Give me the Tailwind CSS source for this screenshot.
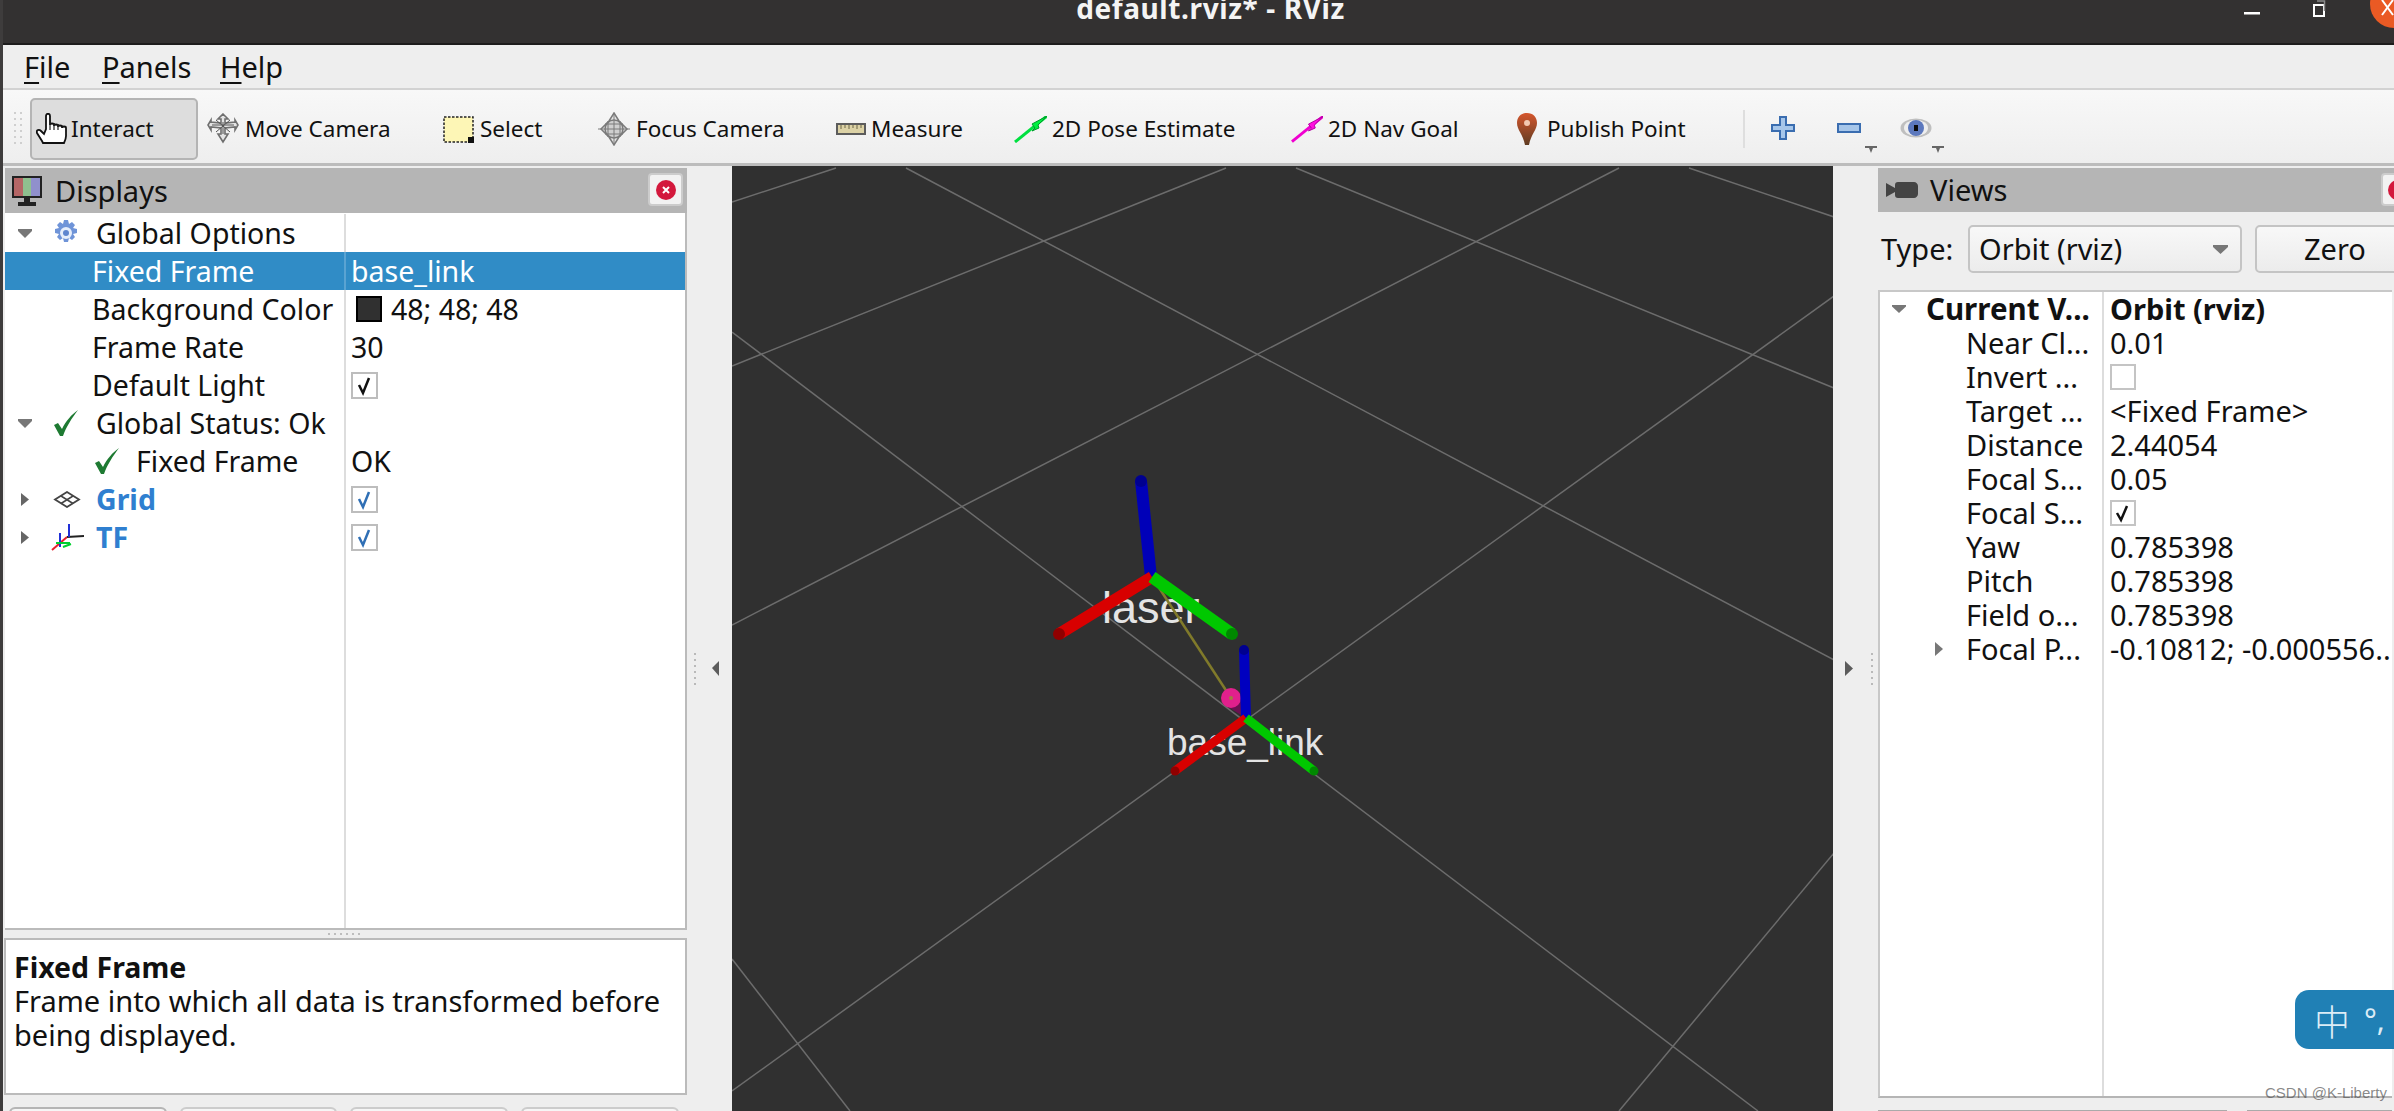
<!doctype html>
<html lang="en">
<head>
  <meta charset="utf-8" />
  <title>default.rviz* - RViz</title>
  <script src="https://cdn.jsdelivr.net/npm/@tailwindcss/browser@4"></script>
</head>
<body class="bg-[#eeeeee]">
<div class="flex flex-col w-[2394px] h-[1111px] overflow-hidden border-l-[3px] border-[#3e3c3c] bg-[#eeeeee] text-[#111] font-['Noto_Sans',sans-serif] whitespace-nowrap">

  <!-- title bar -->
  <div class="relative shrink-0 h-[45px] bg-[#333131] flex justify-center border-b-2 border-[#1d1c1c] -ml-[3px]">
    <span class="text-[28px] leading-none font-bold text-[#f4f4f4] -mt-[6px] ml-[27px] tracking-[0.6px]">default.rviz* - RViz</span>
    <svg class="absolute left-[2240px] top-0" width="154" height="30" viewBox="0 0 154 30">
      <rect x="4" y="12" width="16" height="2.500" fill="#fff"/>
      <rect x="74" y="5" width="10" height="11" fill="none" stroke="#fff" stroke-width="2"/>
      <path d="M77 1h7.500v10" fill="none" stroke="#8b8b8b" stroke-width="1.500"/>
      <circle cx="154" cy="4" r="24" fill="#ea5a24"/>
      <path d="M142 0l11 15M153 0l-11 15" stroke="#fff" stroke-width="2"/>
    </svg>
  </div>

  <!-- menu bar -->
  <div class="shrink-0 h-[45px] bg-[#eeeeee] border-b-2 border-[#d2d2d2] flex items-center pl-[21px] text-[29px]">
    <span class="w-[78px]"><u class="underline-offset-4">F</u>ile</span>
    <span class="w-[118px]"><u class="underline-offset-4">P</u>anels</span>
    <span><u class="underline-offset-4">H</u>elp</span>
  </div>

  <!-- toolbar -->
  <div class="shrink-0 h-[76px] bg-linear-to-b from-[#f8f8f8] to-[#eeeeee] border-b-[3px] border-[#bcbcbc] flex items-center text-[22.500px] pl-[11px] pt-[5px]">
    <svg class="shrink-0" width="8" height="34" viewBox="0 0 8 34" fill="#cfcfcf">
      <rect x="0" y="0" width="2" height="2"/><rect x="6" y="0" width="2" height="2"/>
      <rect x="0" y="6" width="2" height="2"/><rect x="6" y="6" width="2" height="2"/>
      <rect x="0" y="12" width="2" height="2"/><rect x="6" y="12" width="2" height="2"/>
      <rect x="0" y="18" width="2" height="2"/><rect x="6" y="18" width="2" height="2"/>
      <rect x="0" y="24" width="2" height="2"/><rect x="6" y="24" width="2" height="2"/>
      <rect x="0" y="30" width="2" height="2"/><rect x="6" y="30" width="2" height="2"/>
    </svg>
    <div class="shrink-0 ml-[8px] w-[168px] h-[62px] bg-[#dddddd] border-2 border-[#b4b4b4] rounded-[5px] flex items-center pl-[4px]">
      <svg class="shrink-0" width="32" height="32" viewBox="0 0 32 32"><path d="M10 16V3c0-3 4-3 4 0v9c0-2 4-2 4 0v1c0-2 4-2 4 0v1c0-2 4-2 4 0v1c0-2 4-2 4 0v8c0 3-1 5-2 7H7l-1-2-5-8c-1-3 2-4 4-2l3 3z" fill="#fff" stroke="#111" stroke-width="1.800"/><path d="M14 7v10M18 10v7M22 11v6" stroke="#222" stroke-width="1.200"/></svg>
      <span class="ml-[3px]">Interact</span>
    </div>
    <div class="shrink-0 ml-[9px] w-[236px] flex items-center">
      <svg class="shrink-0" width="32" height="32" viewBox="0 0 32 32" fill="none" stroke="#6f6f6f" stroke-width="1.600"><path d="M16 1l5 5h-3v4l10-1V7l3 5-3 5v-3l-10 1v6h3l-5 8-5-8h3v-6L4 14v3l-3-5 3-5v2l10 1V6h-3z" fill="#e4e4e4"/><path d="M9 7l14 12M23 7L9 19M16 9v12M5 12h22" stroke="#555" stroke-width="1"/></svg>
      <span class="ml-[6px]">Move Camera</span>
    </div>
    <div class="shrink-0 w-[154px] flex items-center">
      <svg class="shrink-0" width="31" height="27" viewBox="0 0 31 27"><rect x="1" y="1" width="29" height="25" fill="#fdf6b6" stroke="#222" stroke-width="1.500" stroke-dasharray="2.500 1.500"/><rect x="25" y="21" width="6" height="6" fill="#111"/></svg>
      <span class="ml-[6px]">Select</span>
    </div>
    <div class="shrink-0 w-[239px] flex items-center">
      <svg class="shrink-0" width="34" height="34" viewBox="0 0 34 34" fill="none" stroke="#7a7a7a" stroke-width="1.500"><path d="M17 1l5 8 8 8-8 8-5 8-5-8-8-8 8-8z" fill="#e6e6e6"/><circle cx="17" cy="17" r="9" fill="#cfcfcf"/><path d="M17 1v32M1 17h32M11 9v16M23 9v16M8 12h18M8 22h18" stroke-width="1"/></svg>
      <span class="ml-[5px]">Focus Camera</span>
    </div>
    <div class="shrink-0 w-[178px] flex items-center">
      <svg class="shrink-0" width="30" height="12" viewBox="0 0 30 12"><rect x="1" y="1" width="28" height="10" fill="#dcd2a6" stroke="#5c5c5c" stroke-width="2"/><path d="M5 2v4M9 2v3M13 2v4M17 2v3M21 2v4M25 2v3" stroke="#6b6444" stroke-width="1"/></svg>
      <span class="ml-[5px]">Measure</span>
    </div>
    <div class="shrink-0 w-[277px] flex items-center">
      <svg class="shrink-0" width="33" height="27" viewBox="0 0 33 27"><path d="M1 26L33 0" stroke="#00e040" stroke-width="3"/><path d="M33 0L18 8l3 4-3 3 7-3-1-3z" fill="#00f040" stroke="#009a2a" stroke-width="1"/></svg>
      <span class="ml-[5px]">2D Pose Estimate</span>
    </div>
    <div class="shrink-0 w-[226px] flex items-center">
      <svg class="shrink-0" width="32" height="27" viewBox="0 0 33 27"><path d="M1 26L33 0" stroke="#f000d0" stroke-width="3"/><path d="M33 0L18 8l3 4-3 3 7-3-1-3z" fill="#ff10e0" stroke="#b000a0" stroke-width="1"/></svg>
      <span class="ml-[5px]">2D Nav Goal</span>
    </div>
    <div class="shrink-0 w-[226px] flex items-center">
      <svg class="shrink-0" width="20" height="32" viewBox="0 0 20 32"><defs><linearGradient id="pin" x1="0" y1="0" x2="0" y2="1"><stop offset="0" stop-color="#d5562d"/><stop offset="1" stop-color="#5f3c22"/></linearGradient></defs><path d="M10 0c6 0 10 4 10 10 0 7-6 11-8 22h-4C6 21 0 17 0 10 0 4 4 0 10 0z" fill="url(#pin)"/><circle cx="10" cy="10" r="3" fill="#f2c8b0"/></svg>
      <span class="ml-[10px]">Publish Point</span>
    </div>
    <div class="shrink-0 w-[2px] h-[38px] bg-[#dedede] -mt-[1px]"></div>
    <svg class="shrink-0 ml-[26px] -mt-[3px]" width="24" height="24" viewBox="0 0 24 24"><path d="M9 1h6v8h8v6h-8v8H9v-8H1V9h8z" fill="#a6c6ea" stroke="#3a6db0" stroke-width="2"/></svg>
    <div class="shrink-0 ml-[42px] w-[41px] h-[36px] relative">
      <svg class="absolute left-0 top-[12px]" width="24" height="10" viewBox="0 0 24 10"><rect x="1" y="1" width="22" height="8" fill="#a6c6ea" stroke="#3a6db0" stroke-width="2"/></svg>
      <svg class="absolute left-[28px] top-[35px]" width="12" height="7" viewBox="0 0 12 7"><path d="M0 0h12v2H8l-2 5-2-5H0z" fill="#666"/></svg>
    </div>
    <div class="shrink-0 ml-[22px] w-[44px] h-[36px] relative">
      <svg class="absolute left-0 top-[7px]" width="32" height="20" viewBox="0 0 32 20"><ellipse cx="16" cy="10" rx="15.500" ry="9.500" fill="#bfbfbf"/><ellipse cx="16" cy="10" rx="12" ry="8" fill="#eeeeee"/><circle cx="16" cy="10" r="8" fill="#5c78bd"/><rect x="14" y="7" width="4" height="6" fill="#0c0c0c"/></svg>
      <svg class="absolute left-[32px] top-[35px]" width="12" height="7" viewBox="0 0 12 7"><path d="M0 0h12v2H8l-2 5-2-5H0z" fill="#666"/></svg>
    </div>
  </div>

  <!-- main area -->
  <div class="flex-1 flex min-h-0">

    <!-- displays panel -->
    <div class="shrink-0 w-[684px] pt-[2px] flex flex-col">
      <div class="shrink-0 h-[45px] ml-[2px] bg-[#b5b5b5] flex items-center text-[29px] pl-[6px] relative">
        <svg class="shrink-0" width="32" height="32" viewBox="0 0 32 32"><rect x="1" y="1" width="30" height="22" fill="#222"/><rect x="3" y="3" width="9" height="18" fill="#b56666"/><rect x="12" y="3" width="8" height="18" fill="#8fc08f"/><rect x="20" y="3" width="9" height="18" fill="#9090cc"/><rect x="13" y="23" width="6" height="4" fill="#222"/><rect x="7" y="27" width="18" height="4" fill="#222"/></svg>
        <span class="ml-[12px]">Displays</span>
        <div class="absolute left-[643px] top-[5px] w-[35px] h-[33px] bg-[#f2f2f2] border-2 border-[#cccccc] rounded-[4px] flex items-center justify-center">
          <svg width="22" height="22" viewBox="0 0 22 22"><circle cx="11" cy="11" r="10" fill="#d3183c"/><path d="M8 8l6 6M14 8l-6 6" stroke="#fff" stroke-width="2"/></svg>
        </div>
      </div>

      <div class="shrink-0 h-[717px] ml-[2px] pt-[1px] bg-white border-r-2 border-b-2 border-[#bbbbbb] flex flex-col text-[28.500px] leading-[38px]">
        <div class="flex shrink-0 h-[38px] items-center">
          <div class="w-[341px] h-full border-r-2 border-[#dddddd] flex items-center">
            <svg class="shrink-0 ml-[13px]" width="14" height="9" viewBox="0 0 14 9"><path d="M0 0h14v2l-7 7-7-7z" fill="#777"/></svg>
            <svg class="shrink-0 ml-[21px]" width="26" height="26" viewBox="0 0 26 26"><path d="M11 0h4l1 4 3-2 3 3-2 3 4 1v4l-4 1 2 3-3 3-3-2-1 4h-4l-1-4-3 2-3-3 2-3-4-1V9l4-1-2-3 3-3 3 2z" fill="#6f94d8"/><circle cx="13" cy="13" r="6" fill="#e6eefb"/><circle cx="13" cy="13" r="3" fill="#5f86cf"/></svg>
            <span class="ml-[17px]">Global Options</span>
          </div>
        </div>
        <div class="flex shrink-0 h-[38px] items-center bg-[#308cc6] text-white">
          <div class="w-[341px] h-full border-r-2 border-[#5aa3d2] flex items-center pl-[87px]">Fixed Frame</div>
          <div class="pl-[5px]">base_link</div>
        </div>
        <div class="flex shrink-0 h-[38px] items-center">
          <div class="w-[341px] h-full border-r-2 border-[#dddddd] flex items-center pl-[87px]">Background Color</div>
          <div class="flex items-center pl-[10px]"><span class="w-[26px] h-[26px] bg-[#303030] border-2 border-black"></span><span class="ml-[9px]">48; 48; 48</span></div>
        </div>
        <div class="flex shrink-0 h-[38px] items-center">
          <div class="w-[341px] h-full border-r-2 border-[#dddddd] flex items-center pl-[87px]">Frame Rate</div>
          <div class="pl-[5px]">30</div>
        </div>
        <div class="flex shrink-0 h-[38px] items-center">
          <div class="w-[341px] h-full border-r-2 border-[#dddddd] flex items-center pl-[87px]">Default Light</div>
          <div class="pl-[5px]"><svg class="block" width="27" height="27" viewBox="0 0 27 27"><rect x="1" y="1" width="25" height="25" fill="#fff" stroke="#bdbdbd" stroke-width="2"/><path d="M8 13l4 8 6-15" fill="none" stroke="#111" stroke-width="2.500"/></svg></div>
        </div>
        <div class="flex shrink-0 h-[38px] items-center">
          <div class="w-[341px] h-full border-r-2 border-[#dddddd] flex items-center">
            <svg class="shrink-0 ml-[13px]" width="14" height="9" viewBox="0 0 14 9"><path d="M0 0h14v2l-7 7-7-7z" fill="#777"/></svg>
            <svg class="shrink-0 ml-[21px]" width="26" height="26" viewBox="0 0 26 26"><path d="M1 15l4-2 4 6C13 11 18 5 25 0 19 8 13 17 10 26H7z" fill="#1e7a32"/></svg>
            <span class="ml-[17px]">Global Status: Ok</span>
          </div>
        </div>
        <div class="flex shrink-0 h-[38px] items-center">
          <div class="w-[341px] h-full border-r-2 border-[#dddddd] flex items-center pl-[89px]">
            <svg class="shrink-0" width="26" height="26" viewBox="0 0 26 26"><path d="M1 15l4-2 4 6C13 11 18 5 25 0 19 8 13 17 10 26H7z" fill="#1e7a32"/></svg>
            <span class="ml-[16px]">Fixed Frame</span>
          </div>
          <div class="pl-[5px]">OK</div>
        </div>
        <div class="flex shrink-0 h-[38px] items-center">
          <div class="w-[341px] h-full border-r-2 border-[#dddddd] flex items-center">
            <svg class="shrink-0 ml-[16px]" width="8" height="13" viewBox="0 0 8 13"><path d="M0 0l8 6.500-8 6.500z" fill="#666"/></svg>
            <svg class="shrink-0 ml-[24px]" width="28" height="17" viewBox="0 0 28 17" fill="none" stroke="#444" stroke-width="1.800"><path d="M14 1l12 7.500L14 16 2 8.500z"/><path d="M8 5l12 7.500M20 5L8 12.500" stroke-width="1.500"/></svg>
            <span class="ml-[15px] font-bold text-[#2f7fd0]">Grid</span>
          </div>
          <div class="pl-[5px]"><svg class="block" width="27" height="27" viewBox="0 0 27 27"><rect x="1" y="1" width="25" height="25" fill="#fff" stroke="#bdbdbd" stroke-width="2"/><path d="M8 13l4 8 6-15" fill="none" stroke="#2f6fb5" stroke-width="2.500"/></svg></div>
        </div>
        <div class="flex shrink-0 h-[38px] items-center">
          <div class="w-[341px] h-full border-r-2 border-[#dddddd] flex items-center">
            <svg class="shrink-0 ml-[16px]" width="8" height="13" viewBox="0 0 8 13"><path d="M0 0l8 6.500-8 6.500z" fill="#666"/></svg>
            <svg class="shrink-0 ml-[22px]" width="33" height="28" viewBox="0 0 33 28" fill="none" stroke-width="2"><path d="M16 14L1 27" stroke="#e8202c"/><path d="M16 14l17-1" stroke="#222"/><path d="M18 1v13M9 10v14" stroke="#2030d8"/><path d="M5 20h14M12 24l8-3" stroke="#00d030"/></svg>
            <span class="ml-[12px] font-bold text-[#2f7fd0]">TF</span>
          </div>
          <div class="pl-[5px]"><svg class="block" width="27" height="27" viewBox="0 0 27 27"><rect x="1" y="1" width="25" height="25" fill="#fff" stroke="#bdbdbd" stroke-width="2"/><path d="M8 13l4 8 6-15" fill="none" stroke="#2f6fb5" stroke-width="2.500"/></svg></div>
        </div>
        <div class="flex-1 flex"><div class="w-[341px] border-r-2 border-[#dddddd]"></div></div>
      </div>

      <!-- splitter -->
      <div class="shrink-0 h-[8px] flex items-center justify-center">
        <svg width="34" height="2" viewBox="0 0 34 2" fill="#bdbdbd"><rect x="0" width="2" height="2"/><rect x="6" width="2" height="2"/><rect x="12" width="2" height="2"/><rect x="18" width="2" height="2"/><rect x="24" width="2" height="2"/><rect x="30" width="2" height="2"/></svg>
      </div>

      <!-- help panel -->
      <div class="shrink-0 h-[157px] ml-[1px] bg-white border-2 border-[#bbbbbb] pl-[8px] pt-[10px] text-[29px] leading-[34px]">
        <div class="font-bold text-[28.500px]">Fixed Frame</div>
        <div>Frame into which all data is transformed before</div>
        <div>being displayed.</div>
      </div>

      <div class="shrink-0 flex mt-[12px] ml-[6px] gap-[13px]">
        <div class="w-[158px] h-[30px] bg-[#f6f6f6] border-2 border-[#b5b5b5] rounded-t-[6px]"></div>
        <div class="w-[157px] h-[30px] bg-[#f6f6f6] border-2 border-[#cccccc] rounded-t-[6px]"></div>
        <div class="w-[158px] h-[30px] bg-[#f6f6f6] border-2 border-[#cccccc] rounded-t-[6px]"></div>
        <div class="w-[158px] h-[30px] bg-[#f6f6f6] border-2 border-[#cccccc] rounded-t-[6px]"></div>
      </div>
    </div>

    <!-- left dock handle -->
    <div class="shrink-0 w-[45px] pt-[487px] pl-[7px]">
      <svg class="block" width="32" height="32" viewBox="0 0 32 32"><g fill="#b9b9b9"><rect x="0" y="0" width="2" height="2"/><rect x="0" y="6" width="2" height="2"/><rect x="0" y="12" width="2" height="2"/><rect x="0" y="18" width="2" height="2"/><rect x="0" y="24" width="2" height="2"/><rect x="0" y="30" width="2" height="2"/></g><path d="M25 8L18 15l7 8z" fill="#5c5c5c"/></svg>
    </div>

    <!-- 3D view -->
    <svg class="shrink-0 block bg-[#303030]" width="1101" height="945" viewBox="732 166 1101 945">
      <g stroke="#6c6c6c" stroke-width="1.500">
        <path d="M732 202L836 168"/>
        <path d="M732 366L1226 168"/>
        <path d="M732 625L1619 168"/>
        <path d="M732 1091L1834 296"/>
        <path d="M1619 1111L1834 853"/>
        <path d="M906 168L1834 660"/>
        <path d="M1296 168L1834 388"/>
        <path d="M1689 168L1834 217"/>
        <path d="M732 332L1758 1111"/>
        <path d="M732 959L850 1111"/>
      </g>
      <text x="1102" y="623" font-family="Liberation Sans" font-size="45" fill="#e4e4e4">laser</text>
      <text x="1167" y="755" font-family="Liberation Sans" font-size="37" fill="#e4e4e4">base_link</text>
      <path d="M1152 577L1231 698" stroke="#807a2a" stroke-width="2.500"/>
      <path d="M1223 704L1240 692L1246 718z" fill="#6a1050"/>
      <circle cx="1231" cy="698" r="10" fill="#e0208c"/>
      <circle cx="1231" cy="698" r="2" fill="#a07a40"/>
      <path d="M1141 481L1151 577" stroke="#0000b8" stroke-width="12"/>
      <circle cx="1141" cy="481" r="6" fill="#000090"/>
      <path d="M1152 577L1059 634" stroke="#d80000" stroke-width="12"/>
      <circle cx="1059" cy="634" r="6" fill="#900000"/>
      <path d="M1152 577L1232 634" stroke="#00c800" stroke-width="12"/>
      <circle cx="1232" cy="634" r="6" fill="#008800"/>
      <path d="M1244 650L1246 718" stroke="#0000c0" stroke-width="10"/>
      <circle cx="1244" cy="650" r="5" fill="#000090"/>
      <path d="M1246 718L1175 771" stroke="#d80000" stroke-width="9"/>
      <circle cx="1175" cy="771" r="4.500" fill="#900000"/>
      <path d="M1246 718L1314 771" stroke="#00c800" stroke-width="9"/>
      <circle cx="1314" cy="771" r="4.500" fill="#008800"/>
    </svg>

    <!-- right dock handle -->
    <div class="shrink-0 w-[45px] pt-[487px] pl-[12px]">
      <svg class="block" width="30" height="32" viewBox="0 0 30 32"><path d="M0 8l8 7.500L0 23z" fill="#5c5c5c"/><g fill="#b9b9b9"><rect x="26" y="0" width="2" height="2"/><rect x="26" y="6" width="2" height="2"/><rect x="26" y="12" width="2" height="2"/><rect x="26" y="18" width="2" height="2"/><rect x="26" y="24" width="2" height="2"/><rect x="26" y="30" width="2" height="2"/></g></svg>
    </div>

    <!-- views panel -->
    <div class="flex-1 min-w-0 pt-[2px] flex flex-col relative overflow-hidden">
      <div class="h-[44px] bg-[#b5b5b5] flex items-center text-[29px] pl-[8px] relative shrink-0">
        <svg class="shrink-0" width="32" height="16" viewBox="0 0 32 16"><path d="M0 1l9 5V3c0-2 1-3 3-3h16c2 0 4 2 4 4v8c0 2-2 4-4 4H12c-2 0-3-1-3-3v-3l-9 5z" fill="#444"/></svg>
        <span class="ml-[12px]">Views</span>
        <div class="absolute left-[503px] top-[5px] w-[35px] h-[33px] bg-[#f2f2f2] border-2 border-[#cccccc] rounded-[4px] flex items-center pl-[4px]">
          <svg width="22" height="22" viewBox="0 0 22 22"><circle cx="11" cy="11" r="10" fill="#d3183c"/></svg>
        </div>
      </div>
      <div class="h-[48px] mt-[13px] shrink-0 flex items-center text-[29px] pl-[3px]">
        <span class="shrink-0 w-[87px]">Type:</span>
        <div class="shrink-0 w-[274px] h-full bg-linear-to-b from-[#f8f8f8] to-[#ececec] border-2 border-[#c4c4c4] rounded-[5px] flex items-center pl-[9px] relative">
          Orbit (rviz)
          <svg class="absolute right-[12px] top-[18px]" width="15" height="9" viewBox="0 0 15 9"><path d="M0 0h15v2l-7.500 7L0 2z" fill="#777"/></svg>
        </div>
        <div class="ml-[13px] w-[200px] h-full bg-linear-to-b from-[#f8f8f8] to-[#ececec] border-2 border-[#c4c4c4] rounded-[5px] flex items-center pl-[47px] shrink-0">Zero</div>
      </div>
      <div class="h-[808px] w-[514px] mt-[17px] shrink-0 bg-white border-l-2 border-t-2 border-b-2 border-l-[#c8c8c8] border-t-[#c8c8c8] border-b-[#b5b5b5] flex flex-col text-[29px] leading-[34px] overflow-hidden">
        <div class="flex shrink-0 h-[34px] items-center font-bold">
          <div class="shrink-0 w-[224px] h-full border-r-2 border-[#dddddd] flex items-center pl-[12px]"><svg class="shrink-0" width="14" height="8" viewBox="0 0 14 8"><path d="M0 0h14v1.500L7 8 0 1.500z" fill="#777"/></svg><span class="ml-[20px] text-[29.500px]">Current V...</span></div>
          <div class="pl-[6px]">Orbit (rviz)</div>
        </div>
        <div class="flex shrink-0 h-[34px] items-center"><div class="shrink-0 w-[224px] h-full border-r-2 border-[#dddddd] flex items-center pl-[86px]">Near Cl...</div><div class="pl-[6px]">0.01</div></div>
        <div class="flex shrink-0 h-[34px] items-center"><div class="shrink-0 w-[224px] h-full border-r-2 border-[#dddddd] flex items-center pl-[86px]">Invert ...</div><div class="pl-[6px]"><svg class="block" width="26" height="26" viewBox="0 0 26 26"><rect x="1" y="1" width="24" height="24" fill="#fff" stroke="#c4c4c4" stroke-width="2"/></svg></div></div>
        <div class="flex shrink-0 h-[34px] items-center"><div class="shrink-0 w-[224px] h-full border-r-2 border-[#dddddd] flex items-center pl-[86px]">Target ...</div><div class="pl-[6px]">&lt;Fixed Frame&gt;</div></div>
        <div class="flex shrink-0 h-[34px] items-center"><div class="shrink-0 w-[224px] h-full border-r-2 border-[#dddddd] flex items-center pl-[86px]">Distance</div><div class="pl-[6px]">2.44054</div></div>
        <div class="flex shrink-0 h-[34px] items-center"><div class="shrink-0 w-[224px] h-full border-r-2 border-[#dddddd] flex items-center pl-[86px]">Focal S...</div><div class="pl-[6px]">0.05</div></div>
        <div class="flex shrink-0 h-[34px] items-center"><div class="shrink-0 w-[224px] h-full border-r-2 border-[#dddddd] flex items-center pl-[86px]">Focal S...</div><div class="pl-[6px]"><svg class="block" width="26" height="26" viewBox="0 0 26 26"><rect x="1" y="1" width="24" height="24" fill="#fff" stroke="#c4c4c4" stroke-width="2"/><path d="M7 13l4 7 6-14" fill="none" stroke="#111" stroke-width="2.500"/></svg></div></div>
        <div class="flex shrink-0 h-[34px] items-center"><div class="shrink-0 w-[224px] h-full border-r-2 border-[#dddddd] flex items-center pl-[86px]">Yaw</div><div class="pl-[6px]">0.785398</div></div>
        <div class="flex shrink-0 h-[34px] items-center"><div class="shrink-0 w-[224px] h-full border-r-2 border-[#dddddd] flex items-center pl-[86px]">Pitch</div><div class="pl-[6px]">0.785398</div></div>
        <div class="flex shrink-0 h-[34px] items-center"><div class="shrink-0 w-[224px] h-full border-r-2 border-[#dddddd] flex items-center pl-[86px]">Field o...</div><div class="pl-[6px]">0.785398</div></div>
        <div class="flex shrink-0 h-[34px] items-center"><div class="shrink-0 w-[224px] h-full border-r-2 border-[#dddddd] flex items-center pl-[55px]"><svg class="shrink-0" width="8" height="14" viewBox="0 0 8 14"><path d="M0 0l8 7-8 7z" fill="#777"/></svg><span class="ml-[23px]">Focal P...</span></div><div class="pl-[6px]">-0.10812; -0.000556...</div></div>
        <div class="flex-1 flex"><div class="w-[224px] border-r-2 border-[#dddddd]"></div></div>
      </div>
      <div class="shrink-0 flex mt-[12px] h-[1px]">
        <div class="w-[349px] bg-[#aaaaaa]"></div>
        <div class="ml-[20px] w-[145px] bg-[#aaaaaa]"></div>
      </div>

      <!-- input method bubble -->
      <div class="absolute left-[417px] top-[824px] w-[99px] h-[59px] bg-[#2080b5] rounded-l-[14px] flex items-center text-[#dcecf6] pl-[19px]">
        <span class="text-[36px] leading-none font-light font-['Noto_Sans_CJK_SC',sans-serif]">中</span>
        <span class="ml-[14px] text-[30px] leading-none">°,</span>
      </div>
      <!-- watermark -->
      <span class="absolute left-[387px] top-[917px] text-[15px] leading-[20px] text-[#555]/70 font-['Liberation_Sans',sans-serif]">CSDN @K-Liberty</span>
    </div>
  </div>
</div>
</body>
</html>
